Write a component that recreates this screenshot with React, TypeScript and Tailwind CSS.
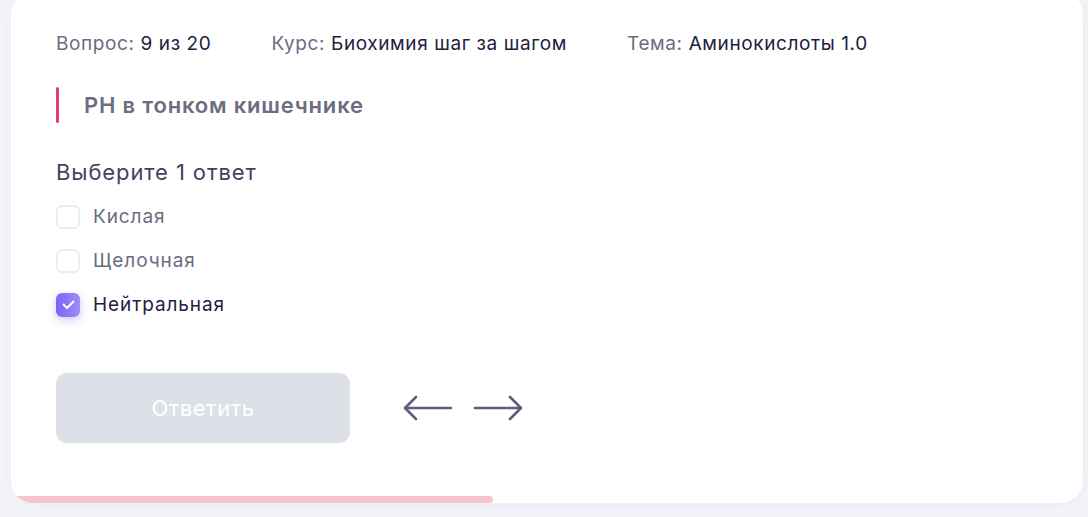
import { useState } from "react";

const options = ["Кислая", "Щелочная", "Нейтральная"];

function Meta({ label, value }: { label: string; value: string }) {
  return (
    <div className="text-[19px] leading-none tracking-[0.6px]">
      <span className="text-[#6b6c80]">{label}: </span>
      <span className="text-[#1f2040]">{value}</span>
    </div>
  );
}

function Arrow({ dir }: { dir: "left" | "right" }) {
  return (
    <svg width="50" height="26" viewBox="0 0 50 26" fill="none">
      {dir === "left" ? (
        <path
          d="M48 13H3M13 2L2 13L13 24"
          stroke="#5c5e7c"
          strokeWidth="2.6"
          strokeLinecap="round"
          strokeLinejoin="round"
        />
      ) : (
        <path
          d="M2 13H47M37 2L48 13L37 24"
          stroke="#5c5e7c"
          strokeWidth="2.6"
          strokeLinecap="round"
          strokeLinejoin="round"
        />
      )}
    </svg>
  );
}

export default function App() {
  const [picked, setPicked] = useState(2);

  return (
    <div className="w-[1088px] h-[517px] bg-[#f3f3f9] pl-[11px] pr-[5px] overflow-hidden font-['Inter',sans-serif]">
      <div className="relative -mt-2 h-[511px] bg-white rounded-[22px] overflow-hidden shadow-[0_2px_12px_rgba(120,120,180,0.06)]">
        <div className="pl-[45px] pt-[42px]">
          <div className="flex gap-[60px]">
            <Meta label="Вопрос" value="9 из 20" />
            <Meta label="Курс" value="Биохимия шаг за шагом" />
            <Meta label="Тема" value="Аминокислоты 1.0" />
          </div>

          <div className="mt-[34px] flex items-center h-[36px]">
            <div className="w-[3px] h-[36px] bg-[#e2406a] rounded-sm" />
            <h2 className="ml-[25px] text-[22px] font-semibold tracking-[0.8px] text-[#6c6d7f]">
              PH в тонком кишечнике
            </h2>
          </div>

          <div className="mt-[38px] text-[22px] tracking-[0.9px] text-[#3f4262] leading-none">
            Выберите 1 ответ
          </div>

          <div className="mt-[22px] flex flex-col gap-[20px]">
            {options.map((o, i) => {
              const on = i === picked;
              return (
                <label
                  key={o}
                  onClick={() => setPicked(i)}
                  className="flex items-center gap-[13px] cursor-pointer h-[24px]"
                >
                  {on ? (
                    <span className="w-[24px] h-[24px] rounded-[6px] bg-gradient-to-r from-[#7766f5] to-[#a38cfa] shadow-[0_3px_8px_rgba(120,100,245,0.35)] flex items-center justify-center">
                      <svg width="13" height="10" viewBox="0 0 13 10" fill="none">
                        <path
                          d="M1.5 4.5L5 8L11.5 1.5"
                          stroke="white"
                          strokeWidth="1.9"
                          strokeLinecap="round"
                          strokeLinejoin="round"
                        />
                      </svg>
                    </span>
                  ) : (
                    <span className="w-[24px] h-[24px] rounded-[6px] border-2 border-[#ececf1] bg-white" />
                  )}
                  <span
                    className={
                      on
                        ? "text-[19px] tracking-[0.9px] text-[#1f2040]"
                        : "text-[19px] tracking-[0.9px] text-[#6b6c80]"
                    }
                  >
                    {o}
                  </span>
                </label>
              );
            })}
          </div>

          <div className="mt-[56px] flex items-center">
            <button className="w-[294px] h-[70px] rounded-[11px] bg-[#dde0e6] text-white text-[22px] tracking-[0.5px]">
              Ответить
            </button>
            <div className="ml-[53px] flex items-center gap-[20px]">
              <Arrow dir="left" />
              <Arrow dir="right" />
            </div>
          </div>
        </div>

        <div className="absolute left-0 bottom-0 w-[482px] h-[7px] bg-[#f5c5cd] rounded-r-full" />
      </div>
    </div>
  );
}
